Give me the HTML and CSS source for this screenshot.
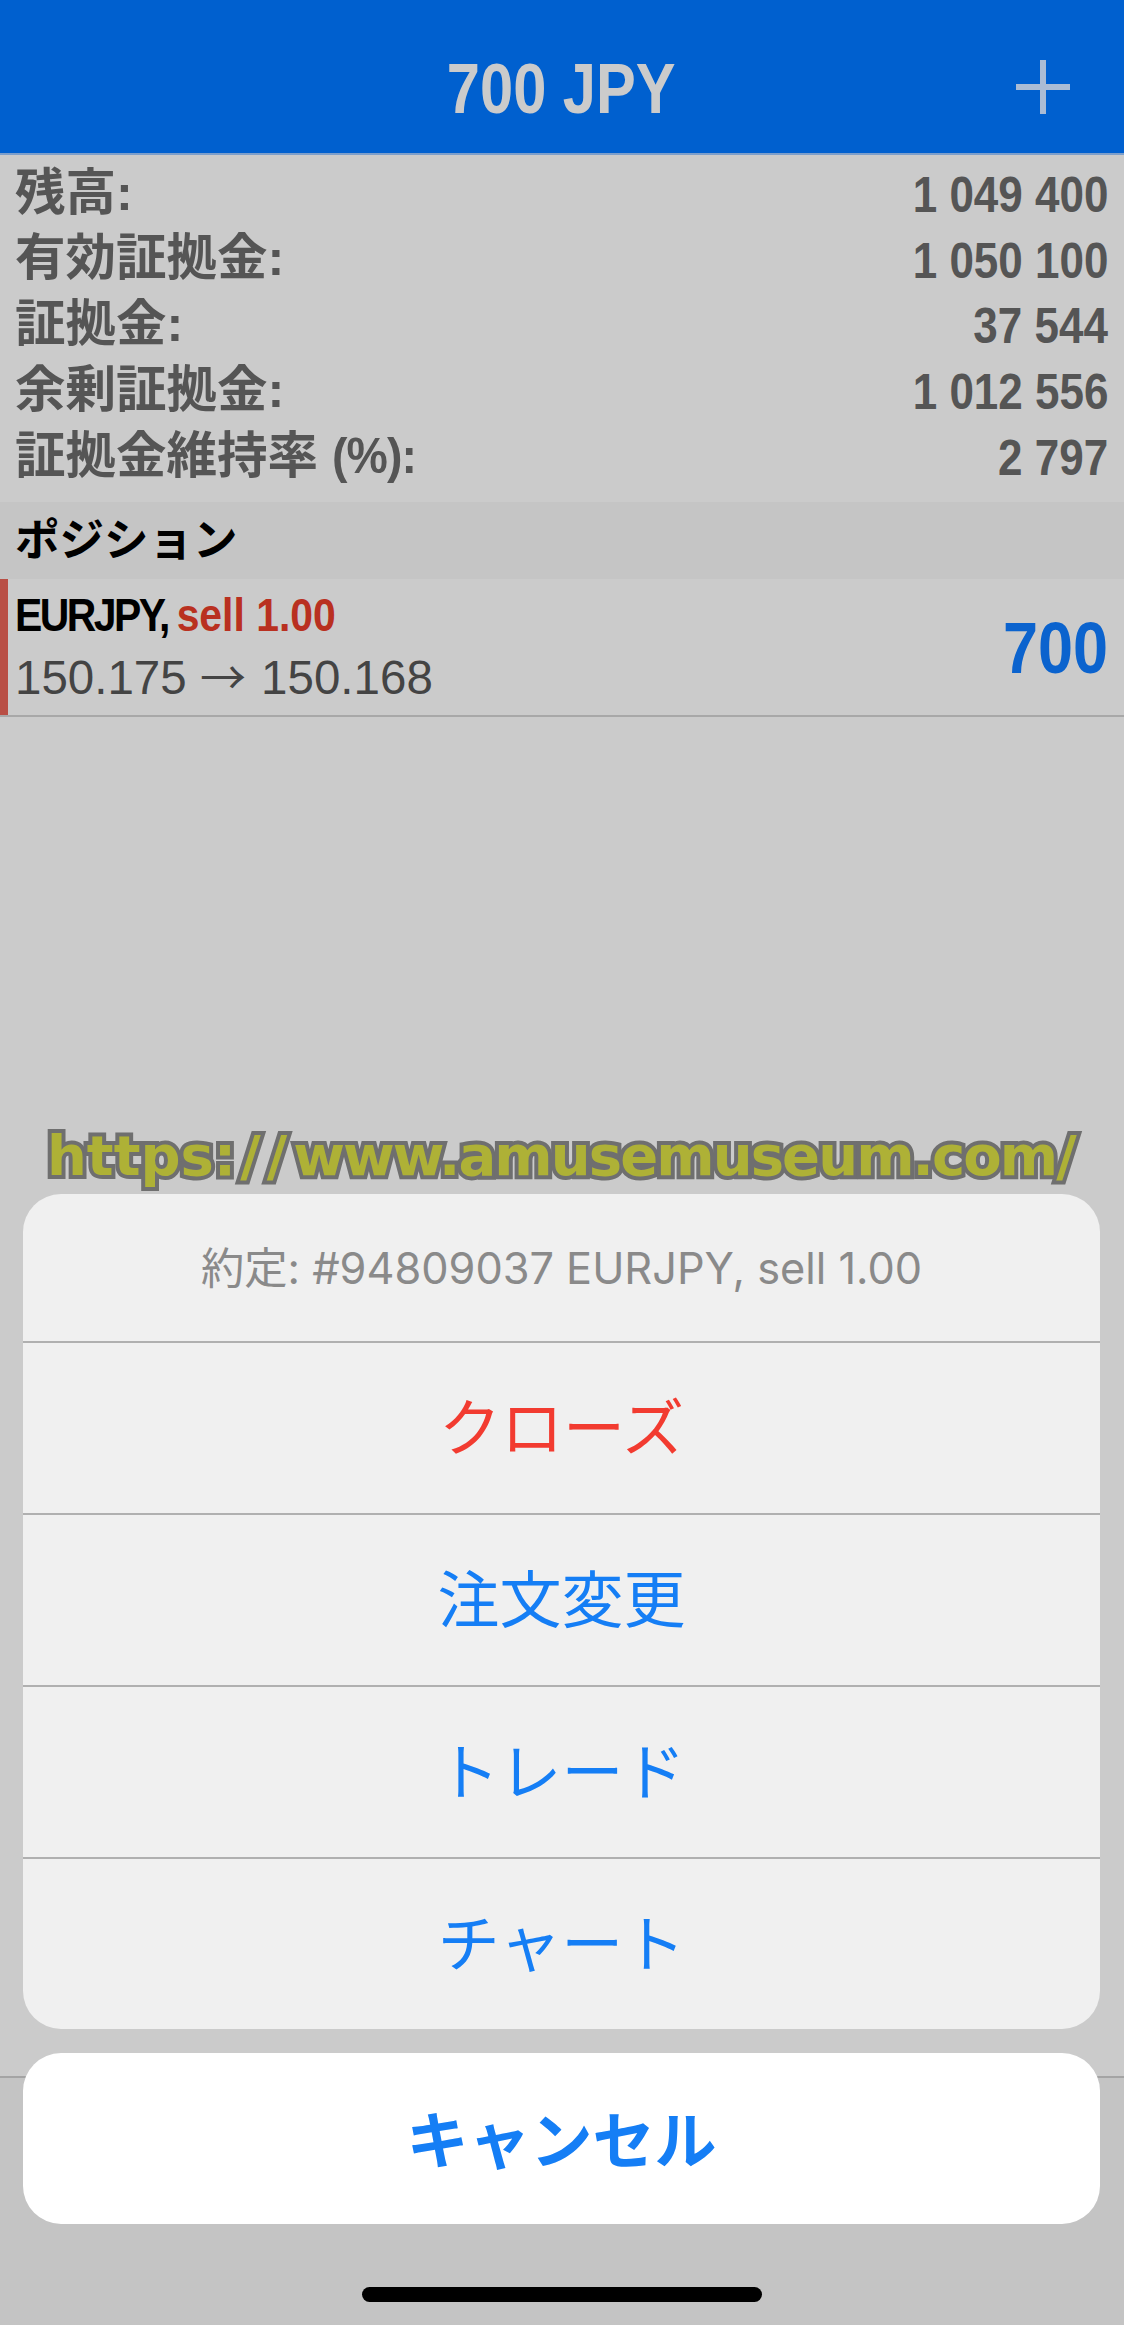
FILE: index.html
```html
<!DOCTYPE html>
<html lang="ja">
<head>
<meta charset="utf-8">
<title>700 JPY</title>
<link rel="stylesheet" href="styles.css">
</head>
<body>
<div class="screen">
  <header class="topbar">
    <h1 class="profit-title">700 JPY</h1>
    <svg class="plus" viewBox="0 0 54 54" aria-hidden="true"><path d="M24 0h6v24h24v6H30v24h-6V30H0v-6h24z"/></svg>
  </header>
  <section class="stats">
    <div class="stat"><span class="label">残高:</span><span class="num">1 049 400</span></div>
    <div class="stat"><span class="label">有効証拠金:</span><span class="num">1 050 100</span></div>
    <div class="stat"><span class="label">証拠金:</span><span class="num">37 544</span></div>
    <div class="stat"><span class="label">余剰証拠金:</span><span class="num">1 012 556</span></div>
    <div class="stat"><span class="label">証拠金維持率 <span class="pct">(%):</span></span><span class="num">2 797</span></div>
  </section>
  <div class="section-head">ポジション</div>
  <div class="position">
    <div class="pos-bar"></div>
    <div class="pos-main">
      <div class="pos-title"><span class="symbol">EURJPY, </span><span class="sell">sell 1.00</span></div>
      <div class="pos-price">150.175 <span class="arrow">→</span> 150.168</div>
    </div>
    <div class="pos-profit">700</div>
  </div>
  <div class="fill"></div>
  <div class="tabbar"></div>

  <div class="watermark"><span>https:</span><span class="slashes">//</span><span class="domain">www.amusemuseum.com</span><span>/</span></div>
  <div class="sheet-wrap">
    <div class="sheet">
      <div class="sheet-title">約定: #94809037 EURJPY, sell 1.00</div>
      <div class="sheet-item danger">クローズ</div>
      <div class="sheet-item">注文変更</div>
      <div class="sheet-item">トレード</div>
      <div class="sheet-item">チャート</div>
    </div>
    <div class="cancel">キャンセル</div>
  </div>
  <div class="home-bar"></div>
</div>
</body>
</html>
```
FILE: styles.css
```css
* { box-sizing: border-box; }
html, body { margin: 0; padding: 0; }
body { font-family: "Liberation Sans", "Noto Sans CJK JP", sans-serif; background: #cbcbcb; }
.screen { position: relative; display: flex; flex-direction: column; height: 2325px; overflow: hidden; background: #cbcbcb; }

.topbar { flex: none; height: 155px; background: #0060cf; border-bottom: 2px solid #7d9fcb; display: flex; align-items: center; justify-content: center; position: relative; }
.profit-title { margin: 0 0 0 -2px; font: bold 71px/1 "Liberation Sans", sans-serif; color: #cbcbcb; padding-top: 24px; transform: scaleX(.84); }
.plus { position: absolute; left: 1016px; top: 60px; width: 54px; height: 54px; fill: #aabcd5; }

.stats { flex: none; padding: 7px 16px 0 15px; height: 347px; }
.stat { display: flex; justify-content: space-between; align-items: center; height: 65.800px; color: #555; font-weight: bold; }
.label { font-size: 50.500px; line-height: 1; padding-bottom: 4px; }
.pct { display: inline-block; letter-spacing: -1px; transform: scaleX(.92); transform-origin: left center; }
.num { font: bold 50px/1 "Liberation Sans", sans-serif; transform: scaleX(.88); transform-origin: right center; }

.section-head { flex: none; height: 77px; background: #c5c5c5; color: #000; font-weight: bold; font-size: 44.500px; line-height: 77px; padding-left: 15px; }

.position { flex: none; height: 138px; border-bottom: 2px solid #a8a8a8; padding-right: 16px; display: flex; align-items: center; }
.pos-bar { flex: none; align-self: stretch; width: 8px; background: #b94f45; }
.pos-main { flex: 1; padding-left: 7px; }
.pos-title { font: bold 47px/54px "Liberation Sans", sans-serif; color: #000; transform: scaleX(.87); transform-origin: left center; white-space: nowrap; }
.symbol { letter-spacing: -2.900px; }
.sell { color: #b93020; }
.pos-price { font-size: 47.500px; line-height: 1.2; color: #444; margin-top: 7px; white-space: nowrap; }
.arrow { font-family: "Noto Sans CJK JP", sans-serif; font-size: 46px; line-height: 1; margin-right: 2px; }
.pos-profit { font: bold 72px/1 "Liberation Sans", sans-serif; color: #0b63ce; transform: scaleX(.875); transform-origin: right center; padding-top: 2px; }

.fill { flex: 1; }
.tabbar { flex: none; height: 249px; background: #c4c4c4; border-top: 2px solid #a4a4a4; }

.watermark { position: absolute; left: 47px; top: 1125px; white-space: nowrap; font: bold 56px/62px "DejaVu Sans", sans-serif; color: #aeb136; -webkit-text-stroke: 8px #6f6f6f; paint-order: stroke fill; }
.slashes { letter-spacing: 6px; margin-left: 4px; }
.domain { letter-spacing: -1.900px; }

.sheet-wrap { position: absolute; left: 23px; right: 24px; top: 1194px; display: flex; flex-direction: column; gap: 24px; }
.sheet { background: #f0f0f0; border-radius: 38px; overflow: hidden; font-family: Inter, "Noto Sans CJK JP", sans-serif; }
.sheet-title { height: 147px; padding-top: 48px; text-align: center; font-size: 43.300px; line-height: 52px; color: #8a8a8a; }
.sheet-item { height: 172px; border-top: 2px solid #b0b0b0; display: flex; align-items: center; justify-content: center; padding-bottom: 8px; font-size: 62px; color: #157ef5; }
.sheet-item.danger { color: #f23b30; }
.cancel { height: 171px; border-radius: 38px; background: #fff; display: flex; align-items: center; justify-content: center; padding-bottom: 4px; font-family: "Noto Sans CJK JP", sans-serif; font-size: 62px; font-weight: bold; color: #157ef5; }

.home-bar { position: absolute; left: 362px; top: 2287px; width: 400px; height: 15px; border-radius: 8px; background: #000; }
```
